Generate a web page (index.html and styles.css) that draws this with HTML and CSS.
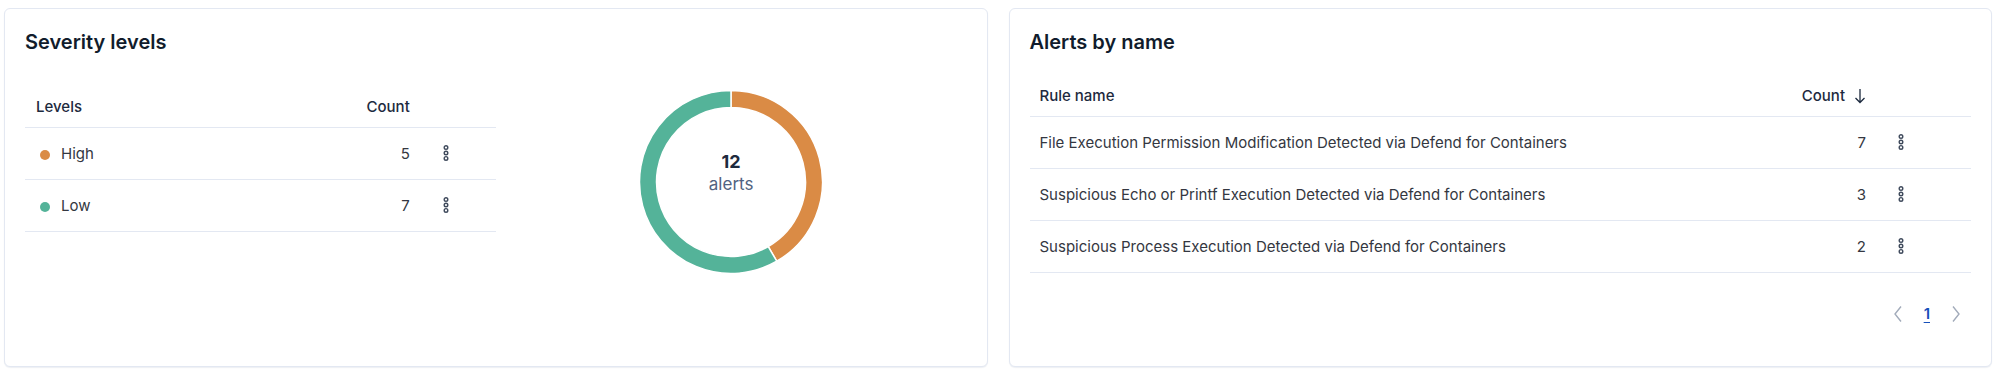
FILE: index.html
```html
<!DOCTYPE html>
<html lang="en">
<head>
  <meta charset="UTF-8">
  <meta name="viewport" content="width=device-width, initial-scale=1.0">
  <title>Alerts overview</title>
  <link rel="stylesheet" href="styles.css">
</head>
<body>
  <div class="panel">
    <h2 class="panel-title severity-title">Severity levels</h2>
    <div class="severity-body">
      <table class="data-table severity-table">
        <colgroup>
          <col>
          <col class="col-count">
          <col class="col-action">
        </colgroup>
        <thead>
          <tr>
            <th>Levels</th>
            <th class="num">Count</th>
            <th></th>
          </tr>
        </thead>
        <tbody>
          <tr>
            <td><span class="dot dot-high"></span>High</td>
            <td class="num">5</td>
            <td class="action">
              <svg class="kebab" width="16" height="16" viewBox="0 0 16 16"><circle cx="8" cy="2.6" r="1.8"/><circle cx="8" cy="8" r="1.8"/><circle cx="8" cy="13.4" r="1.8"/></svg>
            </td>
          </tr>
          <tr>
            <td><span class="dot dot-low"></span>Low</td>
            <td class="num">7</td>
            <td class="action">
              <svg class="kebab" width="16" height="16" viewBox="0 0 16 16"><circle cx="8" cy="2.6" r="1.8"/><circle cx="8" cy="8" r="1.8"/><circle cx="8" cy="13.4" r="1.8"/></svg>
            </td>
          </tr>
        </tbody>
      </table>
      <div class="chart">
        <div class="donut">
          <svg width="184" height="184" viewBox="0 0 184 184">
            <path class="seg-high" d="M92 0.5 A91.5 91.5 0 0 1 137.75 171.24 L129.25 156.52 A74.5 74.5 0 0 0 92 17.5 Z"/>
            <path class="seg-low" d="M137.75 171.24 A91.5 91.5 0 1 1 92 0.5 L92 17.5 A74.5 74.5 0 1 0 129.25 156.52 Z"/>
          </svg>
          <div class="donut-label">
            <span class="donut-total">12</span>
            <span class="donut-unit">alerts</span>
          </div>
        </div>
      </div>
    </div>
  </div>

  <div class="panel">
    <h2 class="panel-title">Alerts by name</h2>
    <table class="data-table rules-table">
      <colgroup>
        <col>
        <col class="col-count">
        <col class="col-action-wide">
      </colgroup>
      <thead>
        <tr>
          <th>Rule name</th>
          <th class="num">Count
            <svg class="sort-arrow" width="12" height="16" viewBox="0 0 12 16"><path d="M6 1v13.5M1.5 10l4.5 4.5L10.5 10"/></svg>
          </th>
          <th></th>
        </tr>
      </thead>
      <tbody>
        <tr>
          <td>File Execution Permission Modification Detected via Defend for Containers</td>
          <td class="num">7</td>
          <td class="action">
            <svg class="kebab" width="16" height="16" viewBox="0 0 16 16"><circle cx="8" cy="2.6" r="1.8"/><circle cx="8" cy="8" r="1.8"/><circle cx="8" cy="13.4" r="1.8"/></svg>
          </td>
        </tr>
        <tr>
          <td>Suspicious Echo or Printf Execution Detected via Defend for Containers</td>
          <td class="num">3</td>
          <td class="action">
            <svg class="kebab" width="16" height="16" viewBox="0 0 16 16"><circle cx="8" cy="2.6" r="1.8"/><circle cx="8" cy="8" r="1.8"/><circle cx="8" cy="13.4" r="1.8"/></svg>
          </td>
        </tr>
        <tr>
          <td>Suspicious Process Execution Detected via Defend for Containers</td>
          <td class="num">2</td>
          <td class="action">
            <svg class="kebab" width="16" height="16" viewBox="0 0 16 16"><circle cx="8" cy="2.6" r="1.8"/><circle cx="8" cy="8" r="1.8"/><circle cx="8" cy="13.4" r="1.8"/></svg>
          </td>
        </tr>
      </tbody>
    </table>
    <div class="pagination">
      <svg class="chevron" width="12" height="18" viewBox="0 0 12 18"><path d="M9 1.5L3 9l6 7.5"/></svg>
      <a class="page current" href="#">1</a>
      <svg class="chevron" width="12" height="18" viewBox="0 0 12 18"><path d="M3 1.5L9 9l-6 7.5"/></svg>
    </div>
  </div>
</body>
</html>
```

FILE: styles.css
```css
* {
  box-sizing: border-box;
}
body {
  margin: 0;
  height: 376px;
  padding: 8px 7px 9px 4px;
  display: flex;
  gap: 21px;
  background: #fff;
  font-family: Inter, "Noto Sans", sans-serif;
  color: #343741;
}
.panel {
  flex: 1;
  min-width: 0;
  border: 1px solid #e3e8f2;
  border-radius: 6px;
  box-shadow: 0 1px 1px rgba(40, 60, 110, 0.08);
  padding: 21px 20px;
  background: #fff;
}
.panel-title {
  margin: 0 0 22px;
  font-size: 20px;
  line-height: 24px;
  font-weight: 600;
  color: #111c2c;
}
.severity-title {
  margin-bottom: 33px;
}
.severity-body {
  display: flex;
  align-items: flex-start;
}
.severity-table {
  width: 50%;
  flex: none;
}
.chart {
  flex: 1;
  display: flex;
  justify-content: center;
  padding-top: 3px;
}
.donut {
  position: relative;
  width: 184px;
  height: 184px;
}
.donut svg {
  display: block;
}
.seg-high {
  fill: #da8b45;
  stroke: #fff;
  stroke-width: 1.5;
}
.seg-low {
  fill: #54b399;
  stroke: #fff;
  stroke-width: 1.5;
}
.donut-label {
  position: absolute;
  inset: 0;
  display: flex;
  flex-direction: column;
  align-items: center;
  justify-content: center;
  padding-bottom: 18px;
}
.donut-total {
  font-size: 18px;
  line-height: 22px;
  font-weight: 700;
  color: #1d2a3e;
}
.donut-unit {
  font-size: 17px;
  line-height: 22px;
  color: #516381;
}
.data-table {
  border-collapse: collapse;
  table-layout: fixed;
  font-size: 15px;
}
.rules-table {
  width: 100%;
}
.col-count {
  width: 120px;
}
.col-action {
  width: 78px;
}
.col-action-wide {
  width: 97px;
}
.data-table th {
  height: 40px;
  padding: 0 8px 0 11px;
  text-align: left;
  font-weight: 500;
  color: #1d2a3e;
  border-bottom: 1px solid #e3e8f2;
  vertical-align: middle;
  white-space: nowrap;
}
.data-table td {
  height: 52px;
  padding: 0 8px 0 11px;
  border-bottom: 1px solid #e3e8f2;
  vertical-align: middle;
  white-space: nowrap;
  overflow: hidden;
}
.rules-table th,
.rules-table td {
  padding-left: 10px;
}
.data-table .num {
  text-align: right;
}
.data-table .action {
  padding-left: 20px;
}
.rules-table .action {
  padding-left: 19px;
}
.kebab {
  display: block;
  fill: none;
  stroke: #3f4a5c;
  stroke-width: 1.4;
}
.sort-arrow {
  vertical-align: -3px;
  margin-left: 5px;
  fill: none;
  stroke: #1d2a3e;
  stroke-width: 1.3;
}
.dot {
  display: inline-block;
  width: 10px;
  height: 10px;
  border-radius: 50%;
  margin: 0 11px 0 4px;
  vertical-align: -1px;
}
.dot-high {
  background: #da8b45;
}
.dot-low {
  background: #54b399;
}
.pagination {
  display: flex;
  justify-content: flex-end;
  align-items: center;
  gap: 20px;
  margin-top: 30px;
  padding-right: 9px;
  height: 22px;
}
.chevron {
  fill: none;
  stroke: #a2abba;
  stroke-width: 1.4;
}
.page {
  font-size: 15px;
  font-weight: 600;
  color: #1750ba;
  text-decoration: underline;
  text-underline-offset: 3px;
}
```
